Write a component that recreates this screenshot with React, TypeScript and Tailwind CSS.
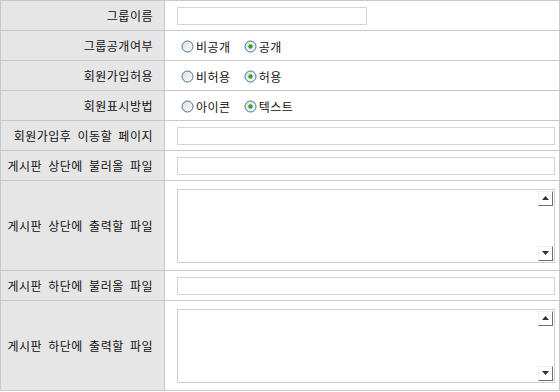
import React from 'react';

type Row =
  | { label: string; kind: 'input'; short?: boolean }
  | { label: string; kind: 'radio'; options: string[]; checked: number }
  | { label: string; kind: 'area' };

const rows: Row[] = [
  { label: '그룹이름', kind: 'input', short: true },
  { label: '그룹공개여부', kind: 'radio', options: ['비공개', '공개'], checked: 1 },
  { label: '회원가입허용', kind: 'radio', options: ['비허용', '허용'], checked: 1 },
  { label: '회원표시방법', kind: 'radio', options: ['아이콘', '텍스트'], checked: 1 },
  { label: '회원가입후 이동할 페이지', kind: 'input' },
  { label: '게시판 상단에 불러올 파일', kind: 'input' },
  { label: '게시판 상단에 출력할 파일', kind: 'area' },
  { label: '게시판 하단에 불러올 파일', kind: 'input' },
  { label: '게시판 하단에 출력할 파일', kind: 'area' },
];

function Radio({ on }: { on: boolean }) {
  return (
    <svg width="13" height="13" viewBox="0 0 13 13" className="shrink-0">
      <defs>
        <linearGradient id="rg" x1="0" y1="0" x2="1" y2="1">
          <stop offset="0" stopColor="#dcdcd6" />
          <stop offset="1" stopColor="#ffffff" />
        </linearGradient>
      </defs>
      <circle cx="6.5" cy="6.5" r="5.5" fill="url(#rg)" stroke="#3f6f9f" strokeWidth="1" />
      {on && <circle cx="6.5" cy="6.5" r="2.2" fill="#2fa52f" />}
    </svg>
  );
}

function ScrollBtn({ up }: { up: boolean }) {
  return (
    <div className="w-[15px] h-[15px] bg-white border-t border-l border-[#f0f0f0] border-r-[#6e6e6e] border-b-[#6e6e6e] border-r border-b flex items-center justify-center">
      <svg width="7" height="4" viewBox="0 0 7 4">
        {up ? <path d="M3.5 0 L7 4 L0 4 Z" fill="#333" /> : <path d="M0 0 L7 0 L3.5 4 Z" fill="#333" />}
      </svg>
    </div>
  );
}

export default function App() {
  return (
    <div className="w-[560px] h-[392px] bg-white text-[12px] text-[#111] tracking-[0.5px] [word-spacing:3px]" style={{ fontFamily: '"Noto Sans CJK KR", "Noto Sans", sans-serif' }}>
      <div className="border border-[#c8c8c8] border-b-0">
        {rows.map((r, i) => (
          <div key={i} className={`flex border-b border-[#c8c8c8] ${r.kind === 'area' ? 'h-[90px]' : 'h-[30px]'}`}>
            <div className="w-[164px] shrink-0 bg-[#e6e6e6] border-r border-[#c8c8c8] flex items-center justify-end pr-[11px] pt-[1px] leading-none">
              {r.label}
            </div>
            <div className="flex-1 flex items-center pl-[12px]">
              {r.kind === 'input' && (
                <div className={`h-[18px] border border-[#d4d4d4] bg-white ${r.short ? 'w-[190px]' : 'w-[378px]'}`} />
              )}
              {r.kind === 'radio' && (
                <div className="flex items-center pl-[4px] pt-[2px] leading-none">
                  {r.options.map((o, j) => (
                    <label key={j} className={`flex items-center gap-[2px] ${j > 0 ? 'ml-[13px]' : ''}`}>
                      <Radio on={j === r.checked} />
                      <span>{o}</span>
                    </label>
                  ))}
                </div>
              )}
              {r.kind === 'area' && (
                <div className="w-[378px] h-[74px] border border-[#d0d0d0] bg-white flex justify-end pr-[1px] py-[1px]">
                  <div className="flex flex-col justify-between">
                    <ScrollBtn up />
                    <ScrollBtn up={false} />
                  </div>
                </div>
              )}
            </div>
          </div>
        ))}
      </div>
    </div>
  );
}
